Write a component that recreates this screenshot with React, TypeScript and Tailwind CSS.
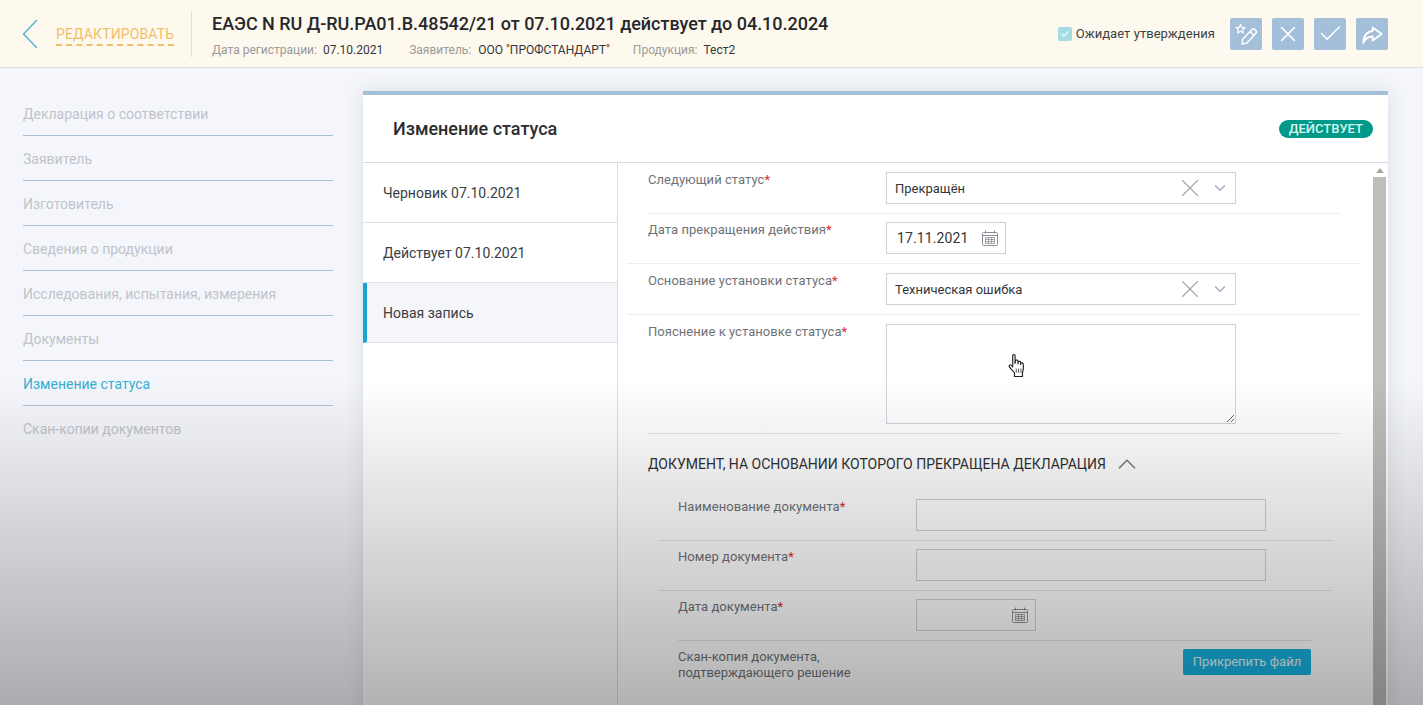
import React from "react";
import { Check, ChevronDown, ChevronUp, X } from "lucide-react";

const navItems = [
  "Декларация о соответствии",
  "Заявитель",
  "Изготовитель",
  "Сведения о продукции",
  "Исследования, испытания, измерения",
  "Документы",
  "Изменение статуса",
  "Скан-копии документов",
];

const tabs = ["Черновик 07.10.2021", "Действует 07.10.2021", "Новая запись"];

const CalendarIcon = () => (
  <svg width="16" height="16" viewBox="0 0 16 16" fill="none" stroke="#8b8f96" strokeWidth="1">
    <rect x="0.5" y="2.5" width="15" height="13" rx="1" />
    <path d="M3.5 0.5v3M12.5 0.5v3M0.5 5.5h15" />
    <path d="M3.5 7.5h9v6h-9zM3.5 9.5h9M3.5 11.5h9M6.5 7.5v6M9.5 7.5v6" strokeWidth="0.8" />
  </svg>
);

const Label = ({ text }: { text: string }) => (
  <div className="w-[238px] text-[13px] leading-4 tracking-[0.05px] text-[#6f7378]">
    {text}
    <span className="text-[#e0282e]">*</span>
  </div>
);

const SelectBox = ({ value }: { value: string }) => (
  <div className="flex h-[32px] w-[350px] items-center border border-[#cdd1dc] bg-white pl-2 pr-[6px]">
    <span className="flex-1 pt-[2px] text-[13px] text-[#33363a]">{value}</span>
    <X size={30} strokeWidth={0.9} className="mr-[6px] text-[#a0a3a7]" />
    <ChevronDown size={18} strokeWidth={2} className="text-[#a3aec0]" />
  </div>
);

const DateBox = ({ value, tinted }: { value?: string; tinted?: boolean }) => (
  <div className={`flex h-[32px] w-[120px] items-center justify-between border border-[#cdd1dc] pl-2.5 pr-[7px] ${tinted ? "" : "bg-white"}`}>
    <span className="text-[14px] tracking-[0.12px] text-[#33363a]">{value}</span>
    <CalendarIcon />
  </div>
);

const ActionButton = ({ children }: { children: React.ReactNode }) => (
  <button className="flex size-8 items-center justify-center rounded-[2px] bg-[#a3bfd9] text-white">{children}</button>
);

export default function App() {
  return (
    <div className="relative h-[705px] overflow-hidden bg-[#f4f6fb] font-['Roboto',sans-serif]">
      {/* header */}
      <header className="flex h-[68px] items-center border-b border-[#dddcd8] bg-[#fef9ee] pl-[22px] pr-[35px]">
        <svg width="16" height="30" viewBox="0 0 16 30" fill="none" stroke="#5fb8d0" strokeWidth="1.6" className="mt-[1px]">
          <path d="M15 1L1.5 15L15 29" />
        </svg>
        <div className="ml-[18px] flex h-[46px] w-[136px] items-center border-r border-[#e2ded2]">
          <span className="mt-[3px] border-b-2 border-dashed border-[#f0bf6c] text-[14px] leading-5 tracking-[0.12px] text-[#f0bf6c]">
            РЕДАКТИРОВАТЬ
          </span>
        </div>
        <div className="ml-[20px] mt-[2px] flex-1">
          <div className="text-[18px] font-medium leading-6 tracking-[-0.03px] text-[#26282b]">
            ЕАЭС N RU Д-RU.PA01.B.48542/21 от 07.10.2021 действует до 04.10.2024
          </div>
          <div className="mt-[6px] flex text-[12px] leading-4">
            <span className="text-[#9a9a98]">Дата регистрации:</span>
            <span className="ml-[6px] text-[#33363a]">07.10.2021</span>
            <span className="ml-[26px] text-[#9a9a98]">Заявитель:</span>
            <span className="ml-[7px] text-[#33363a]">ООО "ПРОФСТАНДАРТ"</span>
            <span className="ml-[23px] text-[#9a9a98]">Продукция:</span>
            <span className="ml-[6px] text-[#33363a]">Тест2</span>
          </div>
        </div>
        <div className="flex items-center">
          <span className="flex size-[14px] items-center justify-center rounded-[2px] bg-[#a6dbe2]">
            <Check size={10} strokeWidth={2.5} className="text-white" />
          </span>
          <span className="ml-[4px] pt-[1px] text-[13px] tracking-[0.05px] text-[#3c3f43]">Ожидает утверждения</span>
          <div className="ml-[15px] flex gap-[10px]">
            <ActionButton>
              <svg width="32" height="32" viewBox="0 0 32 32" fill="none" stroke="currentColor" strokeWidth="1.5" strokeLinejoin="round">
                <path d="M10.5 6.5l1.3 2.9 3.1.3-2.3 2.1.7 3.1-2.8-1.6-2.8 1.6.7-3.1-2.3-2.1 3.1-.3z" strokeWidth="1.2" />
                <path d="M12 26l.8-5L22 11.5a2 2 0 0 1 2.8 0l1 1a2 2 0 0 1 0 2.8L17 25z" />
                <path d="M20 13.5l3.8 3.8" />
              </svg>
            </ActionButton>
            <ActionButton>
              <X size={26} strokeWidth={1.5} />
            </ActionButton>
            <ActionButton>
              <Check size={27} strokeWidth={1.3} />
            </ActionButton>
            <ActionButton>
              <svg width="32" height="32" viewBox="0 0 32 32" fill="none" stroke="currentColor" strokeWidth="1.8" strokeLinejoin="round">
                <path d="M16.7 9.5L25.7 16l-9 6.5v-4C12 18.5 9 21 7.3 25c.2-7 3.7-11.5 9.4-12z" />
              </svg>
            </ActionButton>
          </div>
        </div>
      </header>

      <div className="flex">
        {/* left navigation */}
        <nav className="ml-[23px] mt-[23px] w-[310px]">
          {navItems.map((item) => (
            <div
              key={item}
              className={`h-[45px] pt-[2px] text-[14px] leading-[43px] ${item === "Скан-копии документов" ? "" : "border-b border-[#a9c0d4]"} ${item === "Изменение статуса" ? "text-[#34aed2]" : "text-[#c0c4c9]"}`}
            >
              {item}
            </div>
          ))}
        </nav>

        {/* status card */}
        <main className="ml-[30px] mt-[23px] h-[640px] w-[1025px] border-t-4 border-[#a3c0d9] bg-white shadow-[0_0_18px_rgba(60,70,90,0.14)]">
          <div className="flex h-[68px] items-center justify-between border-b border-[#d9dce4] pl-[30px] pr-[15px]">
            <h2 className="text-[18px] font-medium text-[#2b2d30]">Изменение статуса</h2>
            <span className="rounded-full bg-[#00998a] px-[10px] text-[13px] font-medium leading-[18px] text-[#d9f5f0]">
              ДЕЙСТВУЕТ
            </span>
          </div>

          <div className="flex h-[570px]">
            <div className="w-[255px] shrink-0 border-r border-[#d9dce4]">
              {tabs.map((tab) => (
                <div
                  key={tab}
                  className={`flex h-[60px] items-center border-b border-[#dfe1e8] pt-[2px] text-[14px] text-[#3a3d41] ${tab === "Новая запись" ? "border-l-4 border-l-[#1ba3cf] bg-[#f5f6fa] pl-4" : "pl-5"}`}
                >
                  {tab}
                </div>
              ))}
            </div>

            <div className="relative flex-1 overflow-hidden">
              <div className="w-[742px] pl-[9px]">
                <div className="ml-[21px] flex h-[51px] w-[692px] border-b border-[#eceef2] pt-[9px]">
                  <Label text="Следующий статус" />
                  <SelectBox value="Прекращён" />
                </div>
                <div className="flex h-[50px] w-[733px] border-b border-[#eceef2] pl-[21px] pt-[8px]">
                  <Label text="Дата прекращения действия" />
                  <DateBox value="17.11.2021" />
                </div>
                <div className="flex h-[51px] w-[733px] border-b border-[#eceef2] pl-[21px] pt-[9px]">
                  <Label text="Основание установки статуса" />
                  <SelectBox value="Техническая ошибка" />
                </div>
                <div className="ml-[21px] flex h-[119px] w-[692px] border-b border-[#e3e5e9] pt-[9px]">
                  <Label text="Пояснение к установке статуса" />
                  <textarea className="h-[100px] w-[350px] border border-[#cdd1dc] bg-white" />
                </div>

                <div className="ml-[21px] mt-[20px] flex h-[20px] items-center text-[14px] text-[#2f3134]">
                  ДОКУМЕНТ, НА ОСНОВАНИИ КОТОРОГО ПРЕКРАЩЕНА ДЕКЛАРАЦИЯ
                  <ChevronUp size={30} strokeWidth={1.4} className="ml-[6px] text-[#7d8084]" />
                </div>

                <div className="ml-[32px] mt-[25px] flex h-[42px] w-[673px] border-b border-[#e3e5e9] pl-[19px]">
                  <Label text="Наименование документа" />
                  <div className="h-[32px] w-[350px] border border-[#cdd1dc] bg-white" />
                </div>
                <div className="ml-[32px] flex h-[50px] w-[673px] border-b border-[#e3e5e9] pl-[19px] pt-[8px]">
                  <Label text="Номер документа" />
                  <div className="h-[32px] w-[350px] border border-[#cdd1dc] bg-white" />
                </div>
                <div className="ml-[51px] flex h-[50px] w-[633px] border-b border-[#e3e5e9] pt-[8px]">
                  <Label text="Дата документа" />
                  <DateBox tinted />
                </div>
                <div className="ml-[51px] flex w-[633px] justify-between pt-[8px]">
                  <div className="text-[13px] leading-4 text-[#6f7378]">
                    Скан-копия документа,
                    <br />
                    подтверждающего решение
                  </div>
                  <button className="h-[26px] w-[128px] rounded-[2px] bg-[#17b3e0] text-[13px] text-[#e4f6fb]">
                    Прикрепить файл
                  </button>
                </div>
              </div>

              {/* scrollbar */}
              <div className="absolute bottom-0 right-[2px] top-0 flex w-[13px] flex-col items-center bg-white">
                <span className="mt-[5px] h-0 w-0 border-x-[4px] border-b-[5px] border-x-transparent border-b-[#a8a8a8]" />
                <div className="mt-[4px] w-full flex-1 bg-[#bdbdbd]" />
              </div>
            </div>
          </div>
        </main>
      </div>

      {/* video player shade */}
      <div className="pointer-events-none absolute inset-x-0 bottom-0 h-[325px] bg-gradient-to-b from-black/0 to-black/30" />

      {/* mouse pointer */}
      <svg
        className="pointer-events-none absolute left-[1008px] top-[354px]"
        width="20"
        height="24"
        viewBox="0 0 17 23"
        preserveAspectRatio="none"
        fill="#fff"
        stroke="#222"
        strokeWidth="1"
        strokeLinejoin="round"
      >
        <path d="M4 1.5c0-1.3 2-1.3 2 0V9l.5-3c.8-.6 1.9-.3 2 .6V9.5l.3-2.2c.7-.6 1.8-.3 1.9.7v2l.4-1.3c.7-.5 1.7-.2 1.8.7.3 3 .2 6-.6 8.6v3.5H5.5V18L2 13.5c-1-1.3-1.2-2.4-.6-2.9.7-.5 1.6.1 2.6 1.8z" />
        <path d="M7 14v4M9 14v4M11 14v4" strokeWidth="0.7" />
      </svg>
    </div>
  );
}
